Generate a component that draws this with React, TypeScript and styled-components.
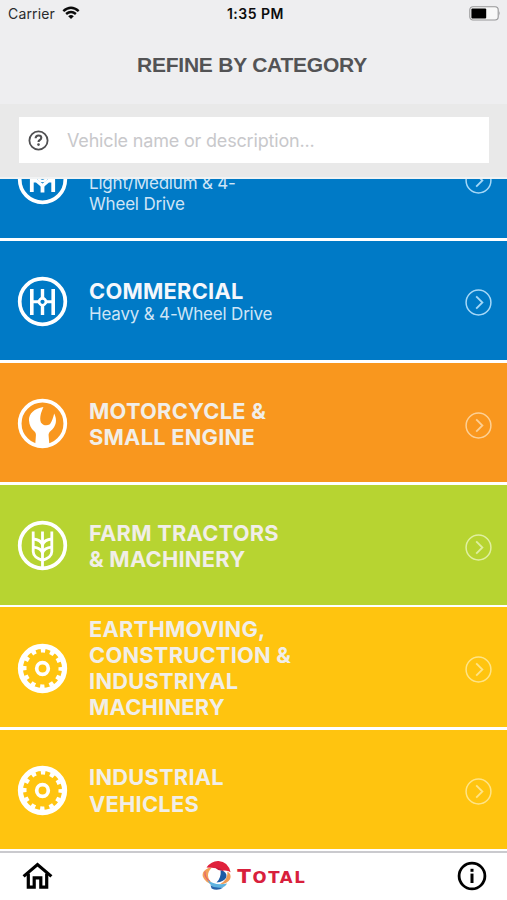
import React from "react";
import styled, { createGlobalStyle } from "styled-components";

const GlobalStyle = createGlobalStyle`
  * { box-sizing: border-box; }
  body { margin: 0; background: #fff; font-family: Inter, "Liberation Sans", sans-serif; }
`;

const Screen = styled.div`
  width: 507px;
  height: 900px;
  display: flex;
  flex-direction: column;
  overflow: hidden;
  background: #fff;
`;

const Header = styled.header`
  height: 104px;
  flex: none;
  background: #eeeef0;
`;

const StatusBar = styled.div`
  height: 28px;
  padding: 0 6px 0 8px;
  display: grid;
  grid-template-columns: 1fr auto 1fr;
  align-items: center;
  color: #0c0c0d;
  font-size: 14px;
  line-height: 28px;
`;

const Carrier = styled.div`
  display: flex;
  align-items: center;
  gap: 7px;
  color: #2a2a2c;
  letter-spacing: 0.15px;
  svg { margin-top: -2px; }
`;

const Clock = styled.div`
  font-weight: 600;
  letter-spacing: 0.5px;
  padding-left: 2px;
`;

const BatterySlot = styled.div`
  display: flex;
  justify-content: flex-end;
  svg { margin-top: -2px; }
`;

const Title = styled.h1`
  margin: 0;
  height: 74px;
  line-height: 74px;
  text-align: center;
  font-family: "Liberation Sans", Arial, sans-serif;
  font-weight: 700;
  font-size: 21px;
  letter-spacing: -0.23px;
  color: #535355;
  padding-right: 3px;
`;

const SearchPanel = styled.div`
  flex: none;
  height: 75px;
  padding: 13px 18px 0 19px;
  background: #e9e9e9;
  border-bottom: 2px solid #f1f3f4;
`;

const SearchField = styled.label`
  display: flex;
  align-items: center;
  height: 46px;
  padding-left: 9px;
  gap: 18px;
  background: #fff;
`;

const SearchInput = styled.input`
  flex: 1;
  min-width: 0;
  height: 40px;
  line-height: 24px;
  border: 0;
  outline: 0;
  padding: 0;
  background: transparent;
  font-family: Inter, sans-serif;
  font-size: 18px;
  letter-spacing: -0.18px;
  &::placeholder { color: #c8c8cb; opacity: 1; }
`;

const ListViewport = styled.main`
  flex: none;
  height: 672px;
  overflow: hidden;
  background: #fff;
`;

const CategoryList = styled.div`
  display: grid;
  grid-auto-rows: 119.5px;
  row-gap: 2.75px;
  margin-top: -60.7px;
`;

const CategoryRow = styled.div<{ $tone: string }>`
  display: flex;
  align-items: center;
  padding: 0 15px 0 17px;
  background: ${(p) => p.$tone};
  color: #fff;
`;

const IconSlot = styled.div`
  width: 72px;
  flex: none;
  display: flex;
  padding-top: 2px;
`;

const Labels = styled.div<{ $drop: number }>`
  flex: 1;
  padding-top: ${(p) => p.$drop}px;
`;

const Name = styled.div<{ $bright?: boolean }>`
  font-size: 21.8px;
  line-height: 26.1px;
  font-weight: 700;
  letter-spacing: 0.26px;
  color: ${(p) => (p.$bright ? "#f4f7fc" : "#f1eee8")};
`;

const Detail = styled.div`
  font-size: 17px;
  line-height: 20.6px;
  letter-spacing: -0.19px;
  color: #cfe5f6;
`;

const ArrowSlot = styled.div`
  display: flex;
  padding-top: 5px;
`;

const TabBar = styled.nav`
  flex: 1;
  display: flex;
  align-items: center;
  justify-content: space-between;
  padding: 0 20px 2px 22px;
  border-top: 2px solid #cacace;
  background: #fff;
`;

const Brand = styled.div`
  display: flex;
  align-items: center;
  gap: 5px;
  margin-right: 3px;
`;

const BrandName = styled.span`
  display: inline-block;
  font-family: "DejaVu Sans", sans-serif;
  font-weight: 700;
  font-size: 16.6px;
  line-height: 24px;
  letter-spacing: 1.6px;
  margin-right: -1.6px;
  padding-top: 2px;
  color: #d8203c;
  &::first-letter { font-size: 20px; }
`;

const WifiIcon = () => (
  <svg width="18" height="14" viewBox="0 0 18 14" fill="none" stroke="#0b0b0b" strokeWidth="2.5">
    <path d="M1.3 5.1Q9-1.7 16.7 5.1" />
    <path d="M4.1 8Q9 3.9 13.9 8" />
    <path d="M6.2 10.2Q9 8 11.8 10.2L9 13Z" fill="#0b0b0b" stroke="none" />
  </svg>
);

const BatteryIcon = () => (
  <svg width="32" height="15" viewBox="0 0 32 15">
    <rect x="0.8" y="0.8" width="28.4" height="13.2" rx="3.2" fill="#f8f8f8" stroke="#969698" strokeWidth="1.1" />
    <rect x="2.4" y="2.4" width="14.8" height="10" rx="1" fill="#000" />
    <path d="M30.3 5.1q1.6 2.3 0 4.6z" fill="#969698" />
  </svg>
);

const HelpIcon = () => (
  <svg width="21" height="21" viewBox="0 0 21 21" fill="none" stroke="#505052">
    <circle cx="10.5" cy="10.5" r="9.1" strokeWidth="1.8" />
    <path d="M7.6 8.3q.1-2.8 3-2.8 2.7 0 2.7 2.3 0 1.4-1.5 2.2-1.3.7-1.3 2.1" strokeWidth="2.1" />
    <circle cx="10.5" cy="14.6" r="1.3" fill="#505052" stroke="none" />
  </svg>
);

const Badge = ({ children }: { children: React.ReactNode }) => (
  <svg width="51" height="51" viewBox="0 0 51 51" fill="none" stroke="#fff">
    <circle cx="25.5" cy="25.5" r="22.8" strokeWidth="3.7" />
    {children}
  </svg>
);

const ChassisIcon = () => (
  <Badge>
    <path d="M14.8 13v26M36.2 13v26" strokeWidth="3.6" />
    <path d="M25.5 13v9M25.5 30v9" strokeWidth="3.4" />
    <path d="M15 25.8h6.5M29.5 25.8H36" strokeWidth="3" />
    <path d="M19.5 25.8l6-5.8 6 5.8-6 5.8z" fill="#fff" stroke="none" />
    <circle cx="25.5" cy="25.8" r="3.4" strokeWidth="2.6" fill="#007ac6" />
  </Badge>
);

const LightChassisIcon = () => (
  <Badge>
    <path d="M14.8 13v25M36.2 13v25" strokeWidth="3.8" />
    <path d="M25.5 31v7.5" strokeWidth="3.8" />
    <path d="M15 26.8h4.5l6 5 6-5H36" strokeWidth="3.4" />
    <circle cx="25.5" cy="23" r="4" strokeWidth="2.6" />
  </Badge>
);

const WrenchIcon = () => (
  <Badge>
    <path
      fill="#fff"
      stroke="none"
      d="M26.4 9C17.5 10.2 11.6 15.8 12 22.5c.3 4.6 2 8 5 10.6 1.6 1.4 2 2.6 1.9 4.4l-.7 9.6q7.3 3 14.2 0l-.8-9.6c-.1-1.8.4-3 2-4.5 5.8-5 6.8-11 3.6-17.6-1.2 4.6-2.2 7.8-4.3 10.8-3.4 2-6.6 1.2-9-1.8-1.7-5 .3-10.2 2.5-15.4z"
    />
  </Badge>
);

const WheatIcon = () => (
  <Badge>
    <g strokeWidth="2.8">
      <path d="M25.5 11.5V48M16.2 11.5v20.3q.2 5.6 9.3 8.6M34.8 11.5v20.3q-.2 5.6-9.3 8.6" />
      <path d="M16.2 19q7.6.8 9.3 5.7 1.7-4.9 9.3-5.7M16.2 27.2q7.6.8 9.3 5.7 1.7-4.9 9.3-5.7" />
    </g>
  </Badge>
);

const GearIcon = () => (
  <Badge>
    <circle cx="25.5" cy="25.5" r="21" strokeWidth="3" />
    <circle cx="25.5" cy="25.5" r="18" strokeWidth="4" strokeDasharray="4.5 4.925" strokeDashoffset="2.25" />
    <circle cx="25.5" cy="25.5" r="5.8" strokeWidth="3.7" />
  </Badge>
);

const ArrowIcon = ({ tint }: { tint: string }) => (
  <svg width="27" height="27" viewBox="0 0 27 27" fill="none" stroke={tint} strokeWidth="1.5">
    <circle cx="13.5" cy="13.5" r="12.4" />
    <path d="M11.2 7.3l6.2 6.2-6.2 6.2" strokeWidth="1.8" />
  </svg>
);

const HomeIcon = () => (
  <svg width="31" height="28" viewBox="0 0 31 28" fill="none" stroke="#000" strokeWidth="3.2">
    <path d="M1.6 14.4L15.5 2.6 29.4 14.4" />
    <path d="M6.3 11.5v13.7h5.9v-9.3h6.6v9.3h5.9V11.5" />
  </svg>
);

const InfoIcon = () => (
  <svg width="30" height="30" viewBox="0 0 30 30">
    <circle cx="15" cy="15" r="12.9" fill="none" stroke="#000" strokeWidth="2.8" />
    <rect x="13.5" y="12.6" width="3" height="9.4" />
    <rect x="13.5" y="7.8" width="3" height="3" />
  </svg>
);

const TotalMark = () => (
  <svg width="30" height="31" viewBox="0 0 30 31">
    <path d="M6.5 8Q-.5 11 .8 16.5 2.6 22.4 12 25.2 6.2 20.6 6 15.6 5.9 11.5 9.5 8Z" fill="#f3a158" />
    <path d="M3 11.5Q2.2 17.5 8 21.5" fill="none" stroke="#e4656a" strokeWidth="1.2" />
    <path d="M4.5 7.4Q9.5.6 16.5.9 26 1.4 28.6 12.2 25.5 9.8 20.5 10.6 15.5 7.4 4.5 7.4Z" fill="#e0213c" />
    <path d="M13 7.4Q19.5 7.6 22.6 12 20 10.6 16.2 10Z" fill="#c61c3f" />
    <path d="M18.6 10.2Q25.4 11.8 24.4 17.2 22.3 21.5 14.5 22.6 19.4 17.6 18.6 10.2Z" fill="#1c5aa5" />
    <path d="M25.4 11.6Q30 14.5 28 19.2 25 24.2 17.5 24.4 26.4 20 25.4 11.6Z" fill="#ef9a55" />
    <path d="M5.4 19.8Q12.5 26 25.2 23.6 22 28.6 15.4 28.4 8.6 27.4 5.4 19.8Z" fill="#5fb3df" />
    <path d="M8.5 25.2Q13.5 29 21.5 27.4 15.5 31.6 9.6 28.6Z" fill="#2864aa" />
  </svg>
);

type Category = {
  name: string[];
  detail?: string[];
  tone: string;
  tint: string;
  icon: React.ReactNode;
};

const categories: Category[] = [
  { name: ["COMMERCIAL"], detail: ["Light/Medium & 4-", "Wheel Drive"], tone: "#007ac6", tint: "#a6d8f7", icon: <LightChassisIcon /> },
  { name: ["COMMERCIAL"], detail: ["Heavy & 4-Wheel Drive"], tone: "#007ac6", tint: "#a6d8f7", icon: <ChassisIcon /> },
  { name: ["MOTORCYCLE &", "SMALL ENGINE"], tone: "#f9971e", tint: "#fcd095", icon: <WrenchIcon /> },
  { name: ["FARM TRACTORS", "& MACHINERY"], tone: "#b7d431", tint: "#e0efa0", icon: <WheatIcon /> },
  { name: ["EARTHMOVING,", "CONSTRUCTION &", "INDUSTRIYAL", "MACHINERY"], tone: "#ffc40f", tint: "#ffe486", icon: <GearIcon /> },
  { name: ["INDUSTRIAL", "VEHICLES"], tone: "#ffc40f", tint: "#ffe486", icon: <GearIcon /> },
];

export default function App() {
  return (
    <Screen>
      <GlobalStyle />
      <Header>
        <StatusBar>
          <Carrier>Carrier <WifiIcon /></Carrier>
          <Clock>1:35 PM</Clock>
          <BatterySlot><BatteryIcon /></BatterySlot>
        </StatusBar>
        <Title>REFINE BY CATEGORY</Title>
      </Header>
      <SearchPanel>
        <SearchField>
          <HelpIcon />
          <SearchInput placeholder="Vehicle name or description..." />
        </SearchField>
      </SearchPanel>
      <ListViewport>
        <CategoryList>
          {categories.map((c, i) => (
            <CategoryRow key={i} $tone={c.tone}>
              <IconSlot>{c.icon}</IconSlot>
              <Labels $drop={c.detail && c.detail.length > 1 ? 5.5 : 2.5}>
                {c.name.map((line) => <Name key={line} $bright={!!c.detail}>{line}</Name>)}
                {c.detail?.map((line) => <Detail key={line}>{line}</Detail>)}
              </Labels>
              <ArrowSlot><ArrowIcon tint={c.tint} /></ArrowSlot>
            </CategoryRow>
          ))}
        </CategoryList>
      </ListViewport>
      <TabBar>
        <HomeIcon />
        <Brand><TotalMark /><BrandName>TOTAL</BrandName></Brand>
        <InfoIcon />
      </TabBar>
    </Screen>
  );
}
